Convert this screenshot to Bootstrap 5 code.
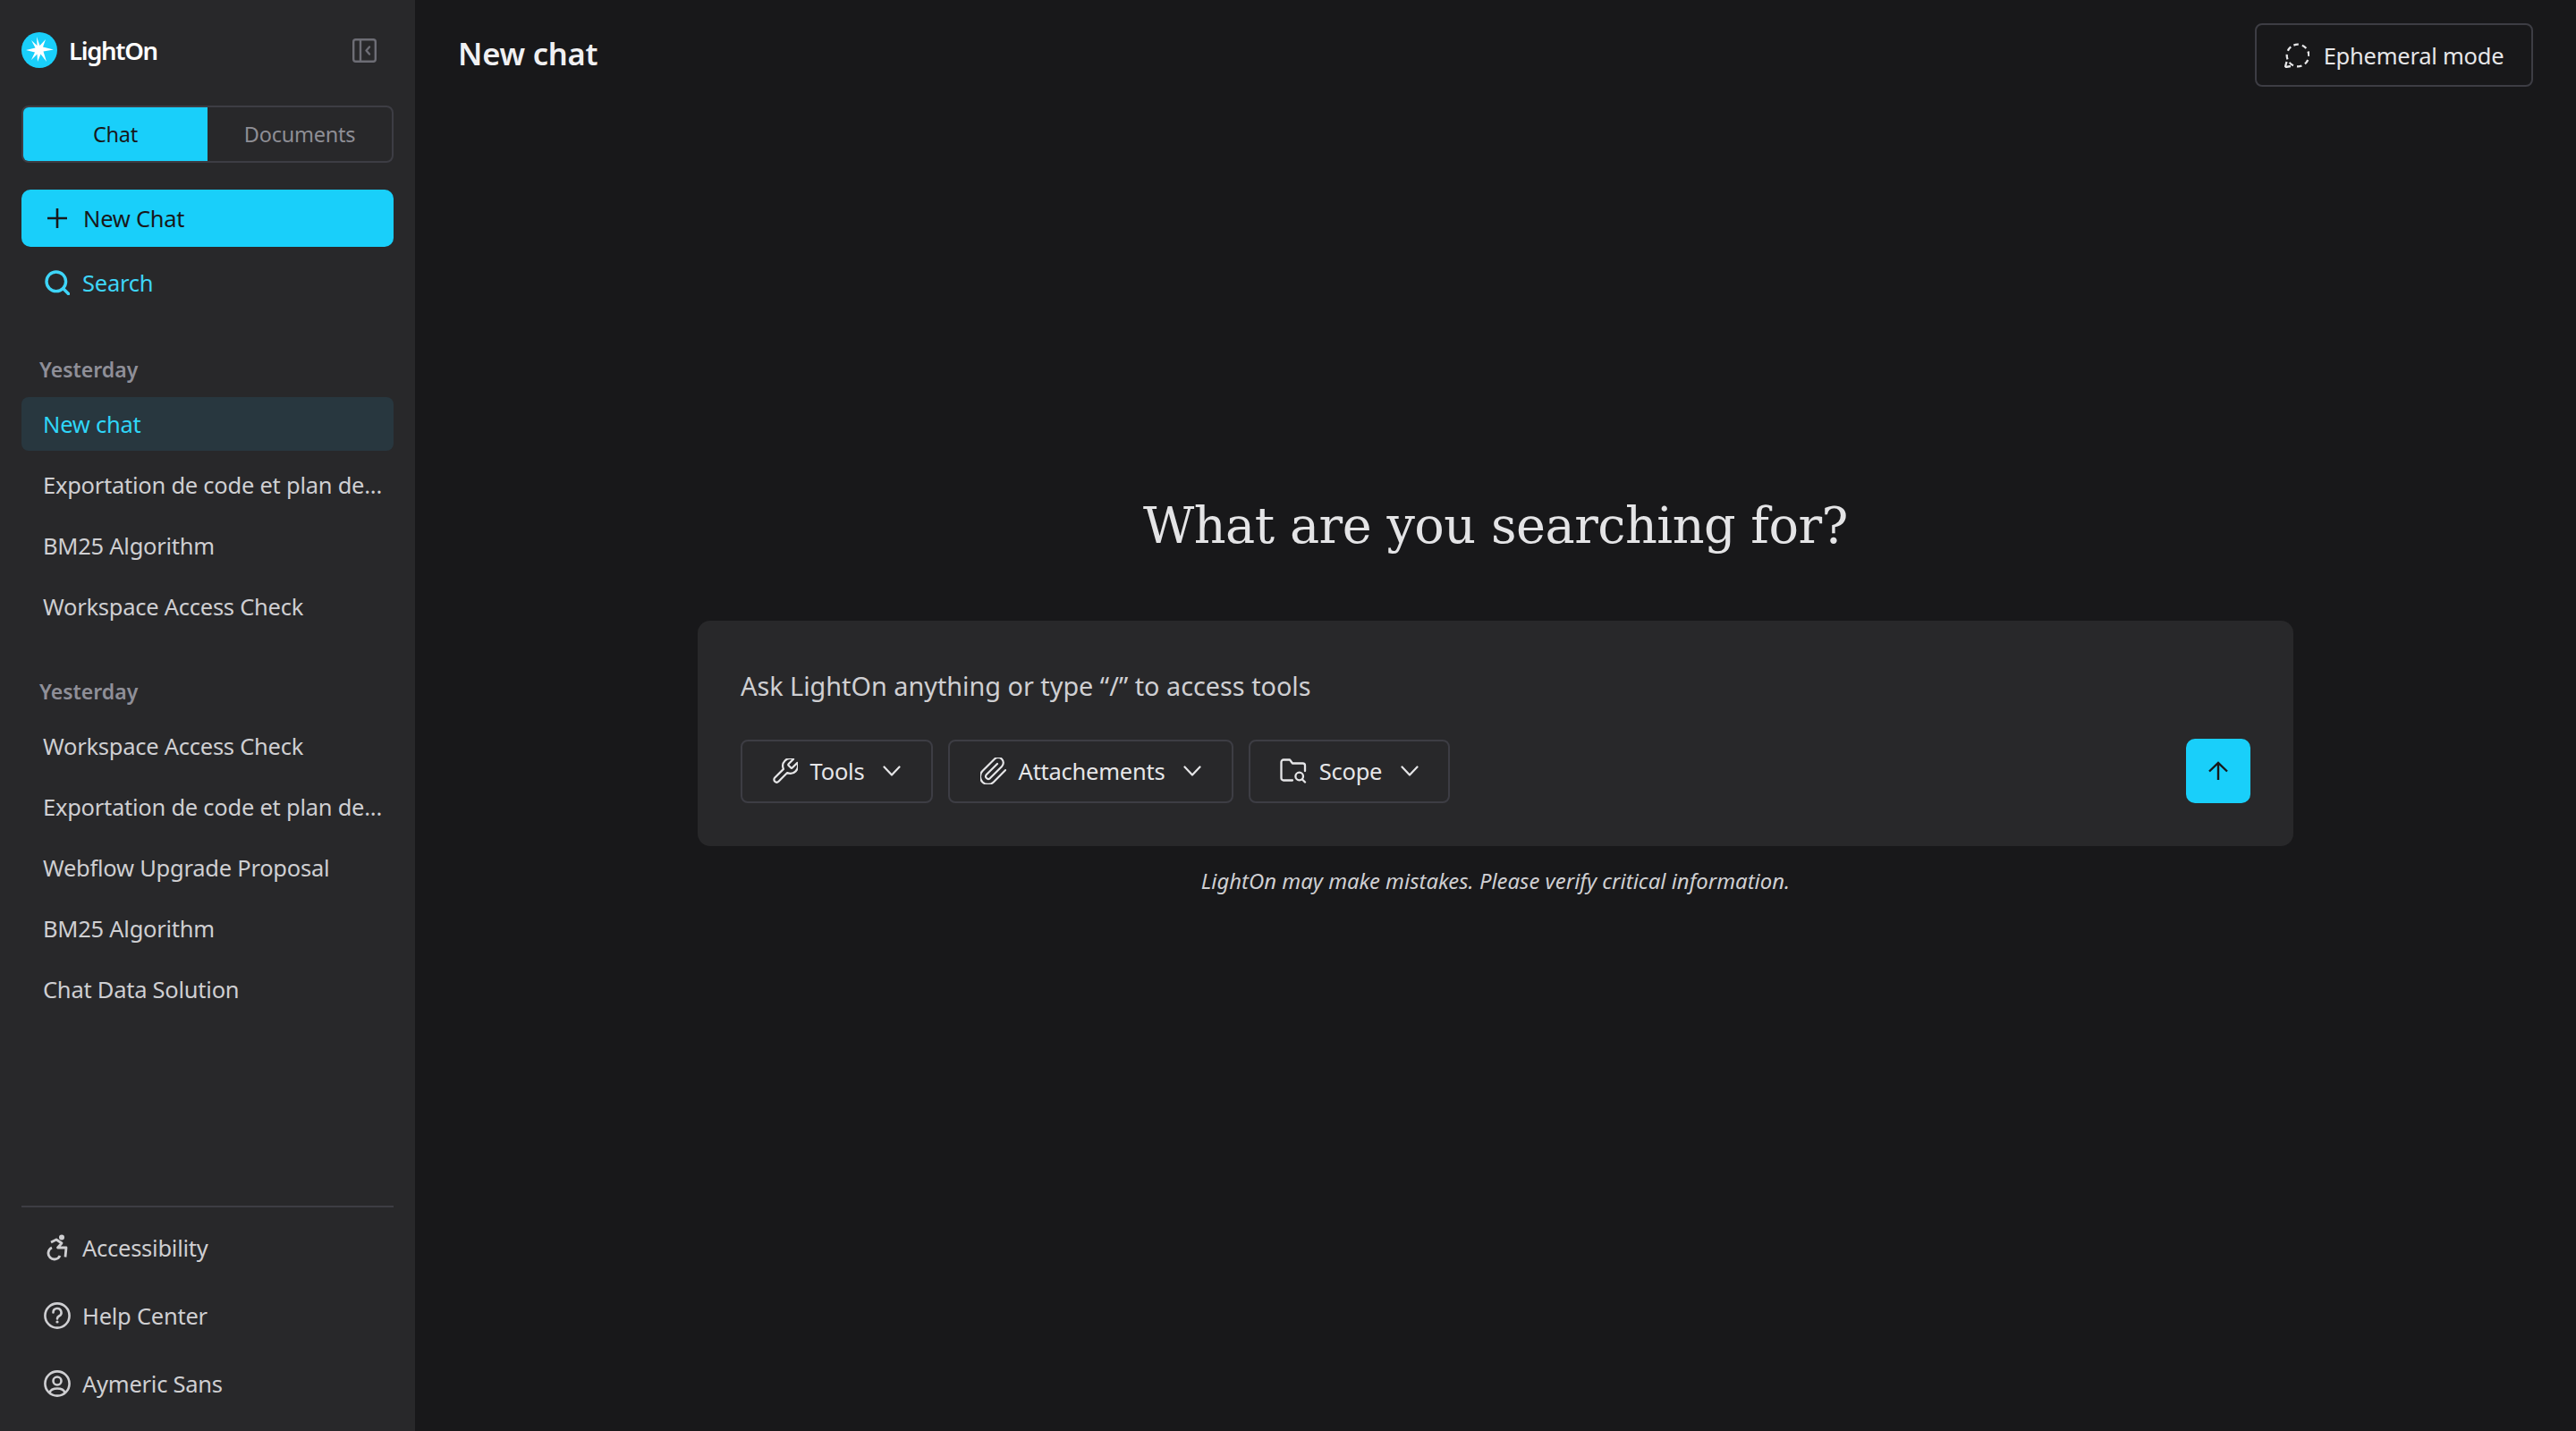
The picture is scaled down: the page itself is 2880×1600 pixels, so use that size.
<!doctype html>
<html lang="en"><head><meta charset="utf-8"><title>LightOn</title>
<link rel="stylesheet" href="https://cdn.jsdelivr.net/npm/bootstrap@5.3.0/dist/css/bootstrap.min.css">
<style>
html,body{height:100%}
body{background:#18181a;color:#e6e6e8;font-family:"Noto Sans",sans-serif;font-size:25.5px;letter-spacing:-.25px;overflow:hidden}
svg{display:block;flex:none}
.lo-shell{height:1600px}
.lo-side{width:464px;background:#28282a;padding:36px 24px 21px}
.lo-brandrow{height:40px;margin-bottom:42px}
.lo-brand{font-size:27.5px;font-weight:600;color:#fff;margin-left:13px;letter-spacing:-1.3px;padding-top:2px}
.lo-collapse{margin-right:19px;color:#6d6d75}
.lo-tabs{height:64px;border:2px solid #3d3d44;border-radius:8px;overflow:hidden;margin-bottom:30px;font-size:23.5px}
.lo-tab{flex:1 1 0;display:flex;align-items:center;justify-content:center;color:#8e8e95;padding-top:1px}
.lo-tab-on{background:#19cffa;color:#18181a}
.lo-new{height:64px;width:100%;background:#19cffa;border:0;border-radius:10px;color:#18181a;font-size:25.5px;letter-spacing:-.25px;padding:0 0 0 29px;gap:18px}
.lo-new:hover,.lo-new:active{background:#19cffa!important;color:#18181a!important}
.lo-search{height:48px;margin-top:16px;padding-left:26px;gap:14px;color:#3ed5f8}
.lo-label{font-size:23px;font-weight:600;color:#8f8f98;line-height:32px;padding-left:20px;margin-top:57px;margin-bottom:15px;letter-spacing:0}
.lo-label2{margin-top:49px}
.lo-list{gap:8px}
.lo-item{height:60px;padding:0 0 0 24px;border-radius:8px;color:#cfcfd2;white-space:nowrap}
.lo-item-on{background:#28373f;color:#2fd6f9}
.lo-foot{border-top:2px solid #3d3d44;padding-top:13px;gap:12px}
.lo-footrow{height:64px;padding-left:25px;gap:13px;color:#cfcfd2}
.lo-main{min-width:0}
.lo-top{padding:26px 48px 0 48px;height:97px}
.lo-title{font-size:34.500px;font-weight:600;color:#f0f0f2;margin:0 0 4px;letter-spacing:-.2px}
.lo-outline{height:71px;border:2px solid #3d3d44;border-radius:8px;background:transparent;color:#e6e6e8;font-size:25.5px;letter-spacing:-.25px;padding:0;gap:14px}
.lo-outline:hover{background:transparent;color:#e6e6e8;border-color:#3d3d44}
.lo-eph{width:311px;gap:16px;padding-top:1px}
.lo-center{width:1784px}
.lo-h{font-family:"DejaVu Serif",serif;font-size:55.7px;font-weight:400;line-height:80px;margin:451px 0 66px;color:#e4e4e6;text-align:center;letter-spacing:-.5px}
.lo-card{background:#28282a;border-radius:14px;padding:53px 48px 48px;height:252px}
.lo-ph{font-size:28.8px;line-height:40px;color:#cfcfd2;margin-bottom:39px;letter-spacing:0}
.lo-tools{gap:17px}
.lo-chev{margin-left:7px}
.lo-send{width:72px;height:72px;background:#19cffa;border:0;border-radius:10px;padding:0}
.lo-send:hover{background:#19cffa}
.lo-b1{width:215px}.lo-b2{width:319px}.lo-b3{width:225px}
.lo-note{font-size:23.9px;font-style:italic;line-height:36px;margin-top:21px;color:#cfcfd2;text-align:center;letter-spacing:0}
</style></head>
<body>
<div class="d-flex lo-shell">
<aside class="lo-side d-flex flex-column flex-shrink-0">
  <div class="d-flex align-items-center lo-brandrow">
    <svg width="40" height="40" viewBox="0 0 40 40"><circle cx="20" cy="20" r="20" fill="#19cffa"/><polygon fill="#fff" points="17,5 20.5,15 27,8 24,16.500 36,19.500 24.500,21.500 28,33 21.500,24.500 18,33 17.500,24.500 11,31 15,22.500 5,20 15.500,17.500 11,9 17.500,15"/></svg>
    <span class="lo-brand">LightOn</span>
    <svg class="ms-auto lo-collapse" width="27" height="27" viewBox="0 0 27 27" fill="none" stroke="currentColor" stroke-width="2.4"><rect x="1.2" y="1.2" width="24.6" height="24.6" rx="2.5"/><path d="M9 1v25"/><path d="M19 9.5 15.5 13.5 19 17.5" stroke-linecap="round" stroke-linejoin="round"/></svg>
  </div>
  <div class="d-flex lo-tabs"><div class="lo-tab lo-tab-on">Chat</div><div class="lo-tab">Documents</div></div>
  <button class="btn d-flex align-items-center lo-new" type="button">
    <svg width="22" height="22" viewBox="0 0 22 22" stroke="#18181a" stroke-width="2.6"><path d="M11 0v22M0 11h22"/></svg>New Chat</button>
  <div class="d-flex align-items-center lo-search">
    <svg width="28" height="28" viewBox="0 0 28 28" fill="none" stroke="currentColor" stroke-width="3.4"><circle cx="12.8" cy="12.8" r="10.800"/><path d="m20.500 20.500 6 6" stroke-linecap="round"/></svg>Search</div>
  <div class="lo-label">Yesterday</div>
  <div class="d-flex flex-column lo-list">
    <div class="d-flex align-items-center lo-item lo-item-on">New chat</div>
    <div class="d-flex align-items-center lo-item">Exportation de code et plan de...</div>
    <div class="d-flex align-items-center lo-item">BM25 Algorithm</div>
    <div class="d-flex align-items-center lo-item">Workspace Access Check</div>
  </div>
  <div class="lo-label lo-label2">Yesterday</div>
  <div class="d-flex flex-column lo-list">
    <div class="d-flex align-items-center lo-item">Workspace Access Check</div>
    <div class="d-flex align-items-center lo-item">Exportation de code et plan de...</div>
    <div class="d-flex align-items-center lo-item">Webflow Upgrade Proposal</div>
    <div class="d-flex align-items-center lo-item">BM25 Algorithm</div>
    <div class="d-flex align-items-center lo-item">Chat Data Solution</div>
  </div>
  <div class="mt-auto d-flex flex-column lo-foot">
    <div class="d-flex align-items-center lo-footrow">
      <svg width="30" height="30" viewBox="0 0 30 30" fill="none" stroke="currentColor" stroke-width="2.800"><circle cx="20" cy="3.500" r="3" fill="currentColor" stroke="none"/><path d="M8 9 14 6 20 10 15.500 15H25L24 25.500" stroke-linejoin="round"/><path d="M9 15a6.800 6.800 0 1 0 9 9"/></svg>Accessibility</div>
    <div class="d-flex align-items-center lo-footrow">
      <svg width="30" height="30" viewBox="0 0 30 30" fill="none" stroke="currentColor" stroke-width="2.6"><circle cx="15" cy="15" r="13.600"/><path d="M10.500 11.500a4.500 4.500 0 1 1 6.500 4c-1.400.8-2 1.500-2 3" stroke-linecap="round"/><circle cx="15" cy="22" r="1.600" fill="currentColor" stroke="none"/></svg>Help Center</div>
    <div class="d-flex align-items-center lo-footrow">
      <svg width="30" height="30" viewBox="0 0 30 30" fill="none" stroke="currentColor" stroke-width="2.6"><circle cx="15" cy="15" r="13.600"/><circle cx="15" cy="12" r="4.500"/><path d="M6.500 25c1-3 4-4.500 8.500-4.500s7.500 1.500 8.500 4.500"/></svg>Aymeric Sans</div>
  </div>
</aside>
<main class="lo-main flex-grow-1 d-flex flex-column">
  <div class="d-flex align-items-center justify-content-between lo-top">
    <h1 class="lo-title">New chat</h1>
    <button class="btn d-flex align-items-center justify-content-center lo-outline lo-eph" type="button">
      <svg width="28" height="28" viewBox="0 0 28 28" fill="none" stroke="currentColor" stroke-width="2.300"><circle cx="15" cy="14" r="12.300" stroke-dasharray="5.500 4.150" transform="rotate(-112 15 14)"/><path d="M.8 27.200 2.500 21M.8 27.200 7 26"/></svg>Ephemeral mode</button>
  </div>
  <div class="lo-center mx-auto">
    <h2 class="lo-h">What are you searching for?</h2>
    <div class="lo-card">
      <div class="lo-ph">Ask LightOn anything or type “/” to access tools</div>
      <div class="d-flex align-items-center justify-content-between">
        <div class="d-flex lo-tools">
          <button class="btn d-flex align-items-center justify-content-center lo-outline lo-b1" type="button">
            <svg width="28" height="28" viewBox="2 2 20 20" fill="none" stroke="currentColor" stroke-width="1.600" stroke-linejoin="round"><path d="M14.700 6.300a1 1 0 0 0 0 1.400l1.600 1.600a1 1 0 0 0 1.400 0l3.770-3.770a6 6 0 0 1-7.940 7.940l-6.910 6.910a2.120 2.120 0 0 1-3-3l6.910-6.910a6 6 0 0 1 7.940-7.940l-3.760 3.760z"/></svg>Tools
            <svg class="lo-chev" width="20" height="12" viewBox="0 0 20 12" fill="none" stroke="currentColor" stroke-width="2.200" stroke-linecap="round" stroke-linejoin="round"><path d="m1.500 1.500 8.500 9 8.500-9"/></svg></button>
          <button class="btn d-flex align-items-center justify-content-center lo-outline lo-b2" type="button">
            <svg width="29" height="30" viewBox="2 1.500 20 20.500" fill="none" stroke="currentColor" stroke-width="1.500" stroke-linecap="round" stroke-linejoin="round"><path d="m21.400 11.100-9.200 9.200a6 6 0 0 1-8.500-8.500l9.200-9.200a4 4 0 0 1 5.700 5.700l-9.200 9.200a2 2 0 0 1-2.800-2.800l8.500-8.500"/></svg>Attachements
            <svg class="lo-chev" width="20" height="12" viewBox="0 0 20 12" fill="none" stroke="currentColor" stroke-width="2.200" stroke-linecap="round" stroke-linejoin="round"><path d="m1.500 1.500 8.500 9 8.500-9"/></svg></button>
          <button class="btn d-flex align-items-center justify-content-center lo-outline lo-b3" type="button">
            <svg width="30" height="28" viewBox="0 0 30 28" fill="none" stroke="currentColor" stroke-width="2.300" stroke-linecap="round" stroke-linejoin="round"><path d="M14 24.500H4A2.500 2.500 0 0 1 1.500 22V4A2.500 2.500 0 0 1 4 1.500h7l3 4h11.500A2.500 2.500 0 0 1 28 8v6"/><circle cx="21.700" cy="20" r="4.300"/><path d="m25 23.500 3 3"/></svg>Scope
            <svg class="lo-chev" width="20" height="12" viewBox="0 0 20 12" fill="none" stroke="currentColor" stroke-width="2.200" stroke-linecap="round" stroke-linejoin="round"><path d="m1.500 1.500 8.500 9 8.500-9"/></svg></button>
        </div>
        <button class="btn d-flex align-items-center justify-content-center lo-send" type="button" aria-label="Send">
          <svg width="22" height="22" viewBox="0 0 22 22" fill="none" stroke="#18181a" stroke-width="2.400"><path d="M11 21V2M1 11.500 11 2l10 9.500"/></svg></button>
      </div>
    </div>
    <p class="lo-note">LightOn may make mistakes. Please verify critical information.</p>
  </div>
</main>
</div>
<script src="https://cdn.jsdelivr.net/npm/bootstrap@5.3.0/dist/js/bootstrap.bundle.min.js"></script>
</body></html>
